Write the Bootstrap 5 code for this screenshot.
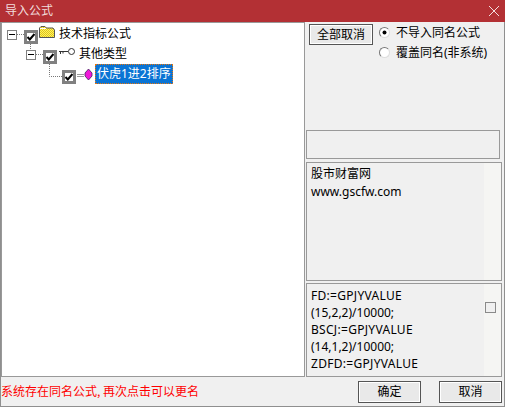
<!doctype html>
<html lang="zh"><head><meta charset="utf-8"><title>导入公式</title>
<link rel="stylesheet" href="https://cdn.jsdelivr.net/npm/bootstrap@5.3.0/dist/css/bootstrap.min.css">
<style>
html,body{margin:0;width:505px;height:407px;overflow:hidden;background:#f0f0f0}
body,.btn{font-family:"Noto Sans","Noto Sans CJK SC",sans-serif;font-size:12px;color:#000;line-height:19px}
.wnd{width:505px;height:407px;border:solid #8f8f8f;border-width:0 1px 1px 1px}
.ttl{height:22px;margin:0 -1px;background:#b33034;color:#f1dcdc;padding-left:5px;line-height:21px}
.xic{margin-right:6px}
.mainrow{height:355px}
.treebox{width:304px;flex:none;background:#fff;border:1px solid #999;padding-top:1px;position:relative}
.treeln{position:absolute;left:-1px;top:-1px}
.trow{height:20px}
.lv1{margin-left:5px}.lv2{margin-left:24px}.lv3{margin-left:43px}
.mbox{width:10px;height:10px;border:1px solid #808080;background:#fff;flex:none;margin-top:6px;position:relative;display:block}
.mbox::after{content:"";position:absolute;left:1px;right:1px;top:3px;height:2px;border-top:1px solid #000}
.cbx{width:14px;height:14px;border:3px solid #808080;background:#fff;flex:none;margin:6px 0 0 7px;display:block}
.lv3 .cbx{margin-left:17px}
.folderic{margin:1px 0 0 1px;flex:none}
.keyic{margin:3px 0 0 2px;flex:none}
.gemic{margin:4px 0 0 1px;flex:none}
.tlbl{line-height:20px;white-space:nowrap;margin-left:4px}
.keyic+.tlbl{margin-left:3px}
.tlbl.tsel{background:#0a74d4;color:#fff;outline:1px dotted #e8760c;outline-offset:-1px;width:78px;padding-left:2px;margin-left:1px}
.side{width:199px;flex:none;padding-left:1px}
.btn.wbtn{--bs-btn-padding-x:0;--bs-btn-padding-y:0;--bs-btn-border-radius:0;width:64px;height:21px;border:1px solid #555;background:#e9e9e9;box-shadow:inset 0 0 0 1px #fff;font-size:12px;line-height:18px;color:#000}
.topside{height:108px;padding:2px 0 0 3px}
.radc{width:11px;height:11px;border-radius:50%;border:1px solid;border-color:#777 #ddd #ddd #777;background:#fff;flex:none;display:block;position:relative;margin-top:4px}
.radc.on::after{content:"";position:absolute;left:3px;top:3px;width:3px;height:3px;border-radius:50%;background:#000;box-shadow:0 0 0 .5px #000}
.radl{line-height:19px;white-space:nowrap}
.radg{margin:-1px 0 0 6px}
.radr{height:20px;gap:6px}
.emptybox{width:194px;height:29px;border:1px solid #999;margin-bottom:3px}
.pane{width:196px;border:1px solid #999;background:#f5f5f3;overflow:hidden}
.p1{height:119px;margin-bottom:2px}
.p2{height:94px}
.ptxt{width:177px;flex:none;background:#f0f0f0;padding:2px 0 0 4px;height:100%;overflow:hidden}
.p1 .ptxt{line-height:18px}
.p2 .ptxt{line-height:17px;padding-top:3px}
.upw{letter-spacing:.3px}
.smchk{width:11px;height:11px;border:1px solid #8a8a8a;background:#f0f0f0;margin:18px 0 0 1px;display:block;flex:none}
.foot{height:29px}
.warn{color:#f00;font-family:"Noto Sans CJK SC",sans-serif;font-size:12px;margin-top:4px;white-space:nowrap}
.fbtns{gap:18px;margin:4px 2px 0 0}
.fbtns .btn.wbtn{width:63px;height:22px}
</style></head><body>
<div class="wnd d-flex flex-column">
  <div class="ttl d-flex"><span class="flex-grow-1">导入公式</span>
    <svg width="10" height="10" viewBox="0 0 10 10" class="xic align-self-center"><path d="M0 0L10 10M10 0L0 10" stroke="#f3dede" fill="none"/></svg></div>
  <div class="mainrow d-flex">
    <div class="treebox">
      <svg class="treeln" width="120" height="90" viewBox="0 22 120 90"><path d="M16 34.500H23M29.500 44V50M35 54.500H42M48.500 64V76.500H61" stroke="#777" stroke-dasharray="1 1" fill="none"/></svg>
      <div class="trow d-flex lv1"><i class="mbox"></i><i class="cbx"><svg width="8" height="8" viewBox="0 0 8 8" class="d-block"><path d="M.5 4l2.300 2.500L7.500 1" stroke="#000" stroke-width="2" fill="none"/></svg></i>
        <svg width="16" height="14" viewBox="0 0 16 14" class="folderic"><defs><pattern id="dth" width="2" height="2" patternUnits="userSpaceOnUse"><rect width="2" height="2" fill="#fff65a"/><rect width="1" height="1" fill="#e0c020"/><rect x="1" y="1" width="1" height="1" fill="#e0c020"/></pattern></defs><path d="M.5 12.500V3L2 1.500H6L7.500 3H14L15.500 5V12.500Z" fill="url(#dth)" stroke="#555"/><path d="M1 3.500H7" stroke="#fff"/></svg>
        <span class="tlbl">技术指标公式</span></div>
      <div class="trow d-flex lv2"><i class="mbox"></i><i class="cbx"><svg width="8" height="8" viewBox="0 0 8 8" class="d-block"><path d="M.5 4l2.300 2.500L7.500 1" stroke="#000" stroke-width="2" fill="none"/></svg></i>
        <svg width="17" height="10" viewBox="0 0 17 10" class="keyic"><circle cx="12.500" cy="4.500" r="3" fill="#fff" stroke="#333"/><path d="M9 4.500H0M1.500 4.500V7M4 4.500V6.500" stroke="#333" fill="none"/></svg>
        <span class="tlbl">其他类型</span></div>
      <div class="trow d-flex lv3"><i class="cbx"><svg width="8" height="8" viewBox="0 0 8 8" class="d-block"><path d="M.5 4l2.300 2.500L7.500 1" stroke="#000" stroke-width="2" fill="none"/></svg></i>
        <svg width="17" height="14" viewBox="0 0 17 14" class="gemic"><path d="M0 6.500H7M0 8.500H7" stroke="#999"/><path d="M8 5L11.500 1L15 5V8L11.500 12L8 8Z" fill="#f018d8" stroke="#402060" stroke-width=".8"/></svg>
        <span class="tlbl tsel">伏虎1进2排序</span></div>
    </div>
    <div class="side d-flex flex-column">
      <div class="topside d-flex">
        <button class="btn wbtn" type="button">全部取消</button>
        <div class="radg">
          <div class="radr d-flex"><i class="radc on"></i><span class="radl">不导入同名公式</span></div>
          <div class="radr d-flex"><i class="radc"></i><span class="radl">覆盖同名(非系统)</span></div>
        </div>
      </div>
      <div class="emptybox"></div>
      <div class="pane p1 d-flex"><div class="ptxt">股市财富网<br>www.gscfw.com</div></div>
      <div class="pane p2 d-flex"><div class="ptxt"><span class="upw">FD:=GPJYVALUE</span><br>(15,2,2)/10000;<br><span class="upw">BSCJ:=GPJYVALUE</span><br>(14,1,2)/10000;<br><span class="upw">ZDFD:=GPJYVALUE</span></div><i class="smchk"></i></div>
    </div>
  </div>
  <div class="foot d-flex justify-content-between">
    <div class="warn">系统存在同名公式, 再次点击可以更名</div>
    <div class="fbtns d-flex"><button class="btn wbtn" type="button">确定</button><button class="btn wbtn" type="button">取消</button></div>
  </div>
</div>
<script src="https://cdn.jsdelivr.net/npm/bootstrap@5.3.0/dist/js/bootstrap.bundle.min.js"></script>
</body></html>
